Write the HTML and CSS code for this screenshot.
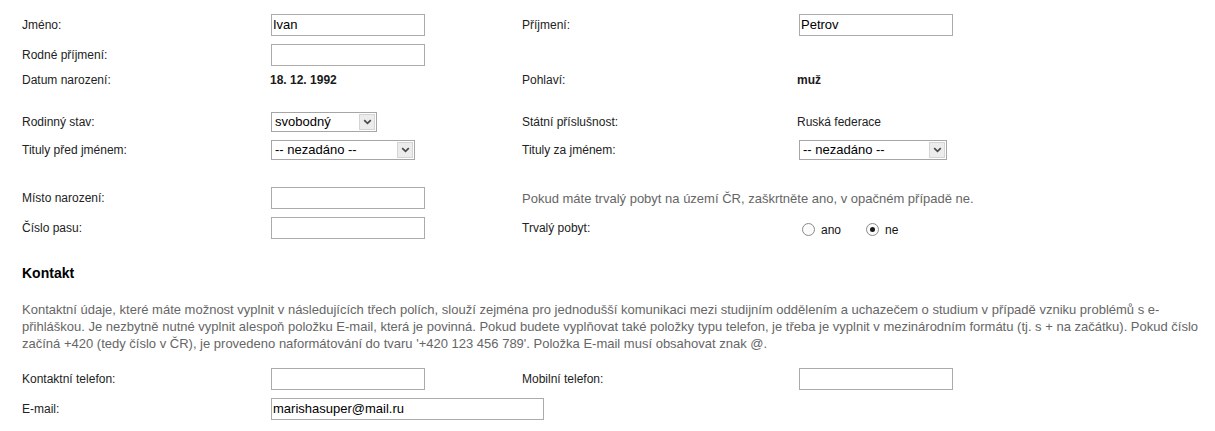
FILE: index.html
```html
<!DOCTYPE html>
<html lang="cs">
<head>
<meta charset="utf-8">
<title>Osobní údaje</title>
<link rel="stylesheet" href="styles.css">
</head>
<body>
<div class="form">
  <div class="row r-tall">
    <div class="label">Jméno:</div>
    <div class="cell"><div class="input w-std">Ivan</div></div>
    <div class="label">Příjmení:</div>
    <div class="cell right"><div class="input w-std">Petrov</div></div>
  </div>
  <div class="row r-tall">
    <div class="label">Rodné příjmení:</div>
    <div class="cell"><div class="input w-std"></div></div>
    <div class="label"></div>
    <div class="cell"></div>
  </div>
  <div class="row r-short">
    <div class="label">Datum narození:</div>
    <div class="cell value bold">18. 12. 1992</div>
    <div class="label">Pohlaví:</div>
    <div class="cell right value bold">muž</div>
  </div>

  <div class="row r-mid gap-a">
    <div class="label">Rodinný stav:</div>
    <div class="cell">
      <div class="select w-small"><span class="sel-val">svobodný</span><span class="sel-btn"><svg width="9" height="6" viewBox="0 0 9 6"><path d="M1.2 1.2 L4.5 4.4 L7.8 1.2" fill="none" stroke="#4a4a4a" stroke-width="1.7"/></svg></span></div>
    </div>
    <div class="label">Státní příslušnost:</div>
    <div class="cell right value">Ruská federace</div>
  </div>
  <div class="row r-mid">
    <div class="label">Tituly před jménem:</div>
    <div class="cell">
      <div class="select w-mid"><span class="sel-val">-- nezadáno --</span><span class="sel-btn"><svg width="9" height="6" viewBox="0 0 9 6"><path d="M1.2 1.2 L4.5 4.4 L7.8 1.2" fill="none" stroke="#4a4a4a" stroke-width="1.7"/></svg></span></div>
    </div>
    <div class="label">Tituly za jménem:</div>
    <div class="cell right">
      <div class="select w-mid2"><span class="sel-val">-- nezadáno --</span><span class="sel-btn"><svg width="9" height="6" viewBox="0 0 9 6"><path d="M1.2 1.2 L4.5 4.4 L7.8 1.2" fill="none" stroke="#4a4a4a" stroke-width="1.7"/></svg></span></div>
    </div>
  </div>

  <div class="row r-mid gap-b">
    <div class="label">Místo narození:</div>
    <div class="cell"><div class="input w-std"></div></div>
    <div class="hint span2">Pokud máte trvalý pobyt na území ČR, zaškrtněte ano, v opačném případě ne.</div>
  </div>
  <div class="row r-mid gap-c">
    <div class="label">Číslo pasu:</div>
    <div class="cell"><div class="input w-std"></div></div>
    <div class="label">Trvalý pobyt:</div>
    <div class="cell right radios">
      <span class="radio"></span><span class="radio-label">ano</span>
      <span class="radio checked"></span><span class="radio-label">ne</span>
    </div>
  </div>

  <h3 class="section-title">Kontakt</h3>
  <p class="note">Kontaktní údaje, které máte možnost vyplnit v následujících třech polích, slouží zejména pro jednodušší komunikaci mezi studijním oddělením a uchazečem o studium v případě vzniku problémů s e-přihláškou. Je nezbytně nutné vyplnit alespoň položku E-mail, která je povinná. Pokud budete vyplňovat také položky typu telefon, je třeba je vyplnit v mezinárodním formátu (tj. s + na začátku). Pokud číslo začíná +420 (tedy číslo v ČR), je provedeno naformátování do tvaru '+420 123 456 789'. Položka E-mail musí obsahovat znak @.</p>

  <div class="row r-tall">
    <div class="label">Kontaktní telefon:</div>
    <div class="cell"><div class="input w-std"></div></div>
    <div class="label">Mobilní telefon:</div>
    <div class="cell right"><div class="input w-std"></div></div>
  </div>
  <div class="row r-tall">
    <div class="label">E-mail:</div>
    <div class="cell span3"><div class="input w-wide">marishasuper@mail.ru</div></div>
  </div>
</div>
</body>
</html>
```

FILE: styles.css
```css
html, body {
  margin: 0;
  padding: 0;
  background: #ffffff;
}

body {
  font-family: "Liberation Sans", Arial, sans-serif;
  font-size: 12px;
  color: #222222;
}

.form {
  padding: 10px 12px 0 22px;
}

.row {
  display: grid;
  grid-template-columns: 248px 252px 275px 1fr;
  align-items: center;
}

.r-tall { height: 30px; }
.r-short { height: 20px; }
.r-mid { height: 28px; }
.gap-a { margin-top: 18px; }
.gap-b { margin-top: 20px; }
.gap-c { margin-top: 2px; }

.label {
  color: #222222;
  font-size: 12px;
}

.cell {
  display: flex;
  align-items: center;
}

.cell .input,
.cell .select {
  margin-left: 1px;
}

.cell.right .input,
.cell.right .select {
  margin-left: 2px;
}

.value {
  font-size: 12px;
  color: #222222;
}

.bold {
  font-weight: bold;
  color: #1a1a1a;
}

.span2 { grid-column: 3 / span 2; }
.span3 { grid-column: 2 / span 3; }

.hint {
  font-size: 13px;
  color: #666666;
}

.input {
  box-sizing: border-box;
  height: 22px;
  border: 1px solid #ababab;
  background: #ffffff;
  font-size: 13px;
  color: #000000;
  padding: 0 0 0 1px;
  line-height: 20px;
  white-space: nowrap;
  overflow: hidden;
}

.w-std { width: 154px; }
.w-wide { width: 273px; }

.select {
  box-sizing: border-box;
  height: 20px;
  border: 1px solid #a6a6a6;
  background: #ffffff;
  display: flex;
  align-items: stretch;
  font-size: 13px;
  color: #000000;
}

.w-small { width: 106px; }
.w-mid { width: 144px; }
.w-mid2 { width: 148px; }

.sel-val {
  flex: 1;
  padding-left: 3px;
  line-height: 18px;
  white-space: nowrap;
  overflow: hidden;
}

.sel-btn {
  box-sizing: border-box;
  width: 16px;
  margin: 1px;
  background: #ececec;
  border: 1px solid #d4d4d4;
  display: flex;
  align-items: center;
  justify-content: center;
}

.radios {
  padding-left: 5px;
  font-size: 12px;
  color: #111111;
}

.radio {
  box-sizing: border-box;
  width: 13px;
  height: 13px;
  border: 1px solid #8a8a8a;
  border-radius: 50%;
  background: #fbfbfb;
  display: flex;
  align-items: center;
  justify-content: center;
  margin-top: 2px;
}

.radio.checked::after {
  content: "";
  width: 5px;
  height: 5px;
  border-radius: 50%;
  background: #1a1a1a;
}

.radio-label {
  margin-left: 6px;
  margin-right: 25px;
  padding-top: 4px;
}

.section-title {
  margin: 23px 0 0 0;
  font-size: 14px;
  font-weight: bold;
  color: #000000;
  line-height: 17px;
}

.note {
  margin: 19px 0 12px 0;
  font-size: 13px;
  line-height: 17px;
  color: #666666;
}
```
